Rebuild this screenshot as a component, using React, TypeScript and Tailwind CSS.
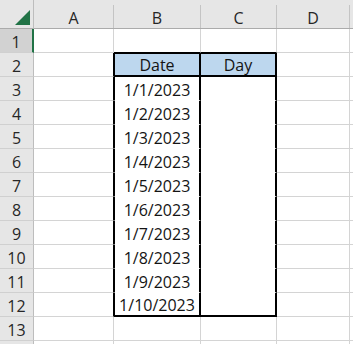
import React from "react";

const dates: Record<number, string> = {
  3: "1/1/2023",
  4: "1/2/2023",
  5: "1/3/2023",
  6: "1/4/2023",
  7: "1/5/2023",
  8: "1/6/2023",
  9: "1/7/2023",
  10: "1/8/2023",
  11: "1/9/2023",
  12: "1/10/2023",
};

const cellBase =
  "h-full flex items-end justify-center leading-[20px] text-[16px] text-[#141414] shrink-0";

function HeaderCell({ w, label }: { w: string; label: string }) {
  return (
    <div className={`${w} h-full flex shrink-0 bg-[#e6e6e6] border-b border-b-[#ababab]`}>
      <div className="flex-1 flex items-end justify-center leading-[20px] text-[16px] text-[#262626]">
        {label}
      </div>
      <div className="w-px mt-[5px] bg-[#c4c4c4]" />
    </div>
  );
}

function aCls(r: number) {
  if (r >= 2 && r <= 12) return "w-[80px] bg-white border-r border-b border-[#d4d4d4] border-r-black";
  return "w-[80px] bg-white border-r border-b border-[#d4d4d4]";
}

function bCls(r: number) {
  if (r === 1) return "w-[87px] bg-white border-r border-b border-[#d4d4d4] border-b-black";
  if (r === 2)
    return "w-[87px] bg-[#bdd7ee] border-l border-t border-r-2 border-b-2 border-black";
  if (r >= 3 && r <= 11)
    return "w-[87px] bg-white border-l border-l-black border-r-2 border-r-black border-b border-b-white";
  if (r === 12) return "w-[87px] bg-white border-l border-r-2 border-b-2 border-black";
  return "w-[87px] bg-white border-r border-b border-[#d4d4d4]";
}

function cCls(r: number) {
  if (r === 1) return "w-[76px] bg-white border-r border-b border-[#d4d4d4] border-b-black";
  if (r === 2) return "w-[76px] bg-[#bdd7ee] border-t border-r-2 border-b-2 border-black";
  if (r >= 3 && r <= 11)
    return "w-[76px] bg-white border-r-2 border-r-black border-b border-b-white";
  if (r === 12) return "w-[76px] bg-white border-r-2 border-b-2 border-black";
  return "w-[76px] bg-white border-r border-b border-[#d4d4d4]";
}

function Row({ r, label }: { r: number; label: boolean }) {
  const selected = r === 1;
  const rh = selected
    ? "w-[34px] bg-[#d2d2d2] border-r-2 border-r-[#217346] border-b border-b-[#d0d0d0] text-[#262626]"
    : "w-[34px] bg-[#e6e6e6] border-r border-r-[#bdbdbd] border-b border-b-[#d0d0d0] text-[#262626]";
  const bText = r === 2 ? "Date" : dates[r] ?? "";
  const cText = r === 2 ? "Day" : "";
  return (
    <div className="flex h-[24px] shrink-0">
      <div className={`${cellBase} ${rh}`}>{label ? r : ""}</div>
      <div className={`${cellBase} ${aCls(r)}`} />
      <div className={`${cellBase} ${bCls(r)}`}>{bText}</div>
      <div className={`${cellBase} ${cCls(r)}`}>{cText}</div>
      <div className={`${cellBase} w-[73px] bg-white border-r border-b border-[#d4d4d4]`} />
      <div className="h-full flex-1 bg-white border-b border-[#d4d4d4]" />
    </div>
  );
}

export default function App() {
  const rows = Array.from({ length: 14 }, (_, i) => i + 1);
  return (
    <div className="w-[353px] h-[344px] overflow-hidden bg-white flex flex-col font-['Open_Sans',sans-serif]">
      <div className="flex h-[29px] shrink-0">
        <div className="w-[34px] h-full shrink-0 bg-[#e6e6e6] border-r border-r-[#bdbdbd] border-b border-b-[#ababab]">
          <svg width="33" height="28" viewBox="0 0 33 28" className="block">
            <polygon points="30,10 30,25 15,25" fill="#217346" />
          </svg>
        </div>
        <HeaderCell w="w-[80px]" label="A" />
        <HeaderCell w="w-[87px]" label="B" />
        <HeaderCell w="w-[76px]" label="C" />
        <HeaderCell w="w-[73px]" label="D" />
        <div className="flex-1 h-full bg-[#e6e6e6] border-b border-b-[#ababab]" />
      </div>
      {rows.map((r) => (
        <Row key={r} r={r} label={r <= 13} />
      ))}
    </div>
  );
}
